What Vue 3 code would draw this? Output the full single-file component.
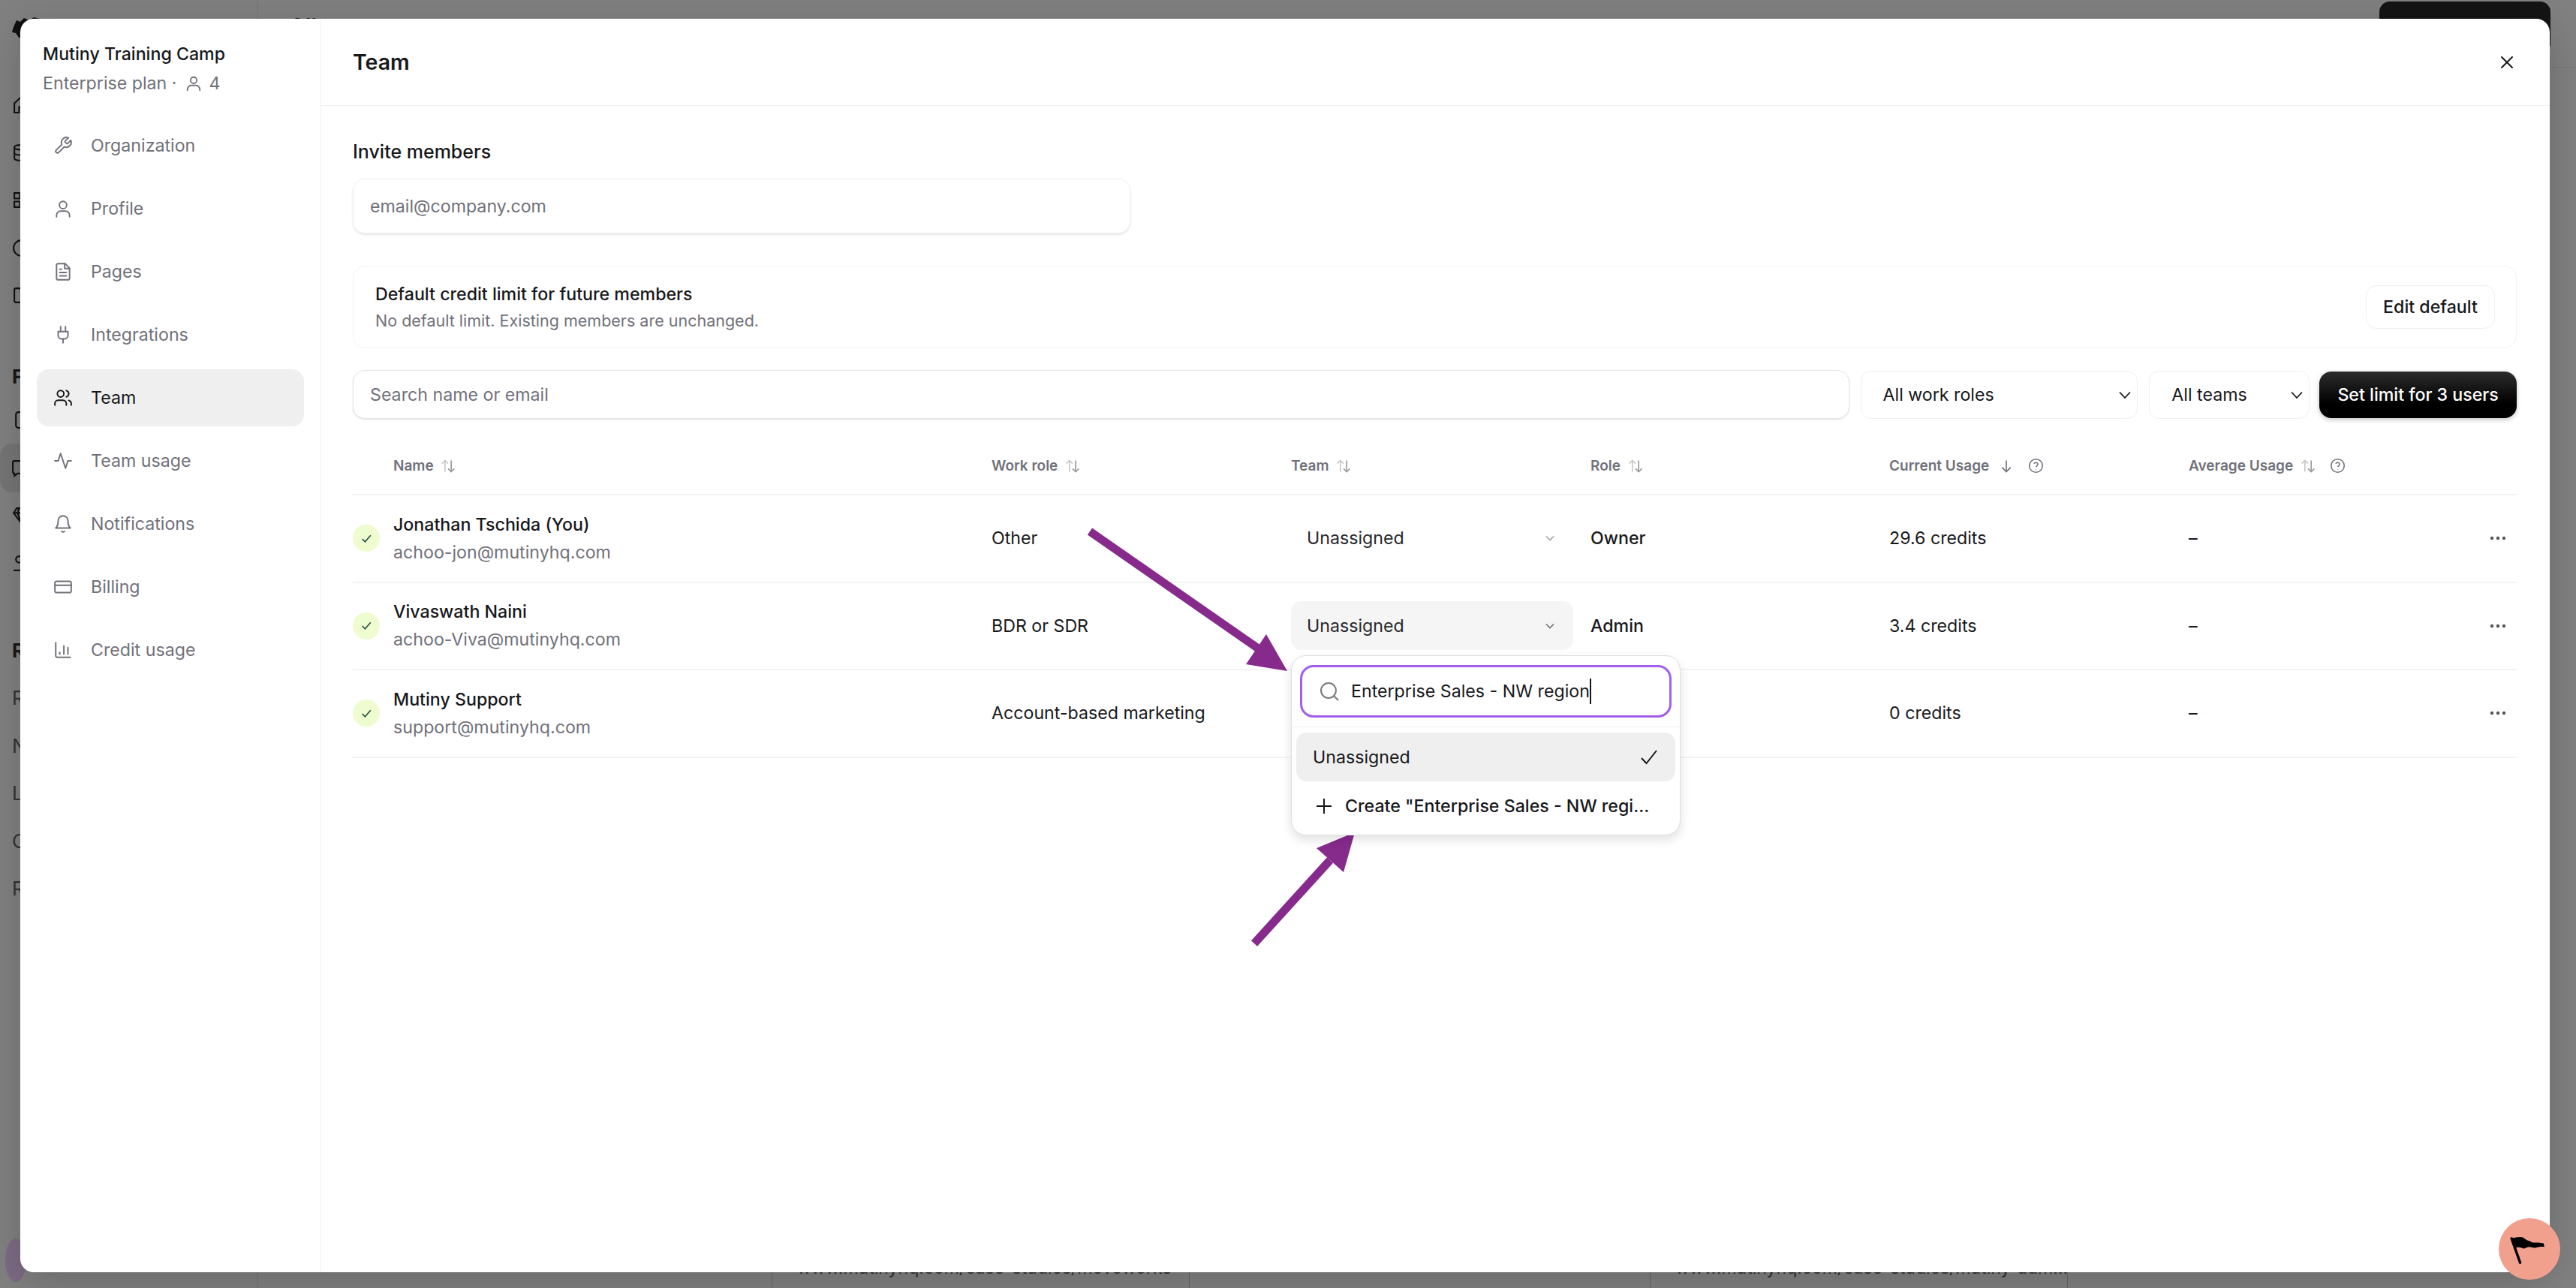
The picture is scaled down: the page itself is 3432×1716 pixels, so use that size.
<template>
  <div class="page">
    <!-- dimmed app behind the modal -->
    <div class="rail">
      <svg class="logo" viewBox="0 0 44 30"><path d="M2 14 6 5l5 2 5-5 7 3 6-4 8 2 4 5-8 12-14 10-10-2-4-6-5-1z" fill="#111" /></svg>
      <div class="rail-icons">
        <svg v-for="(icon, i) in railTop" :key="i" class="rail-icon" viewBox="0 0 24 24" fill="none" stroke="#111" stroke-width="2"><path :d="icon" /></svg>
      </div>
      <div class="rail-head">F</div>
      <div class="rail-icons tight">
        <svg class="rail-icon" viewBox="0 0 24 24" fill="none" stroke="#111" stroke-width="2"><path d="M5 20V5a3 3 0 0 1 3-3h12v20H8a3 3 0 0 1-3-3z" /></svg>
        <div class="rail-active"><svg class="rail-icon" viewBox="0 0 24 24" fill="none" stroke="#111" stroke-width="2"><path d="M3 5a2 2 0 0 1 2-2h14a2 2 0 0 1 2 2v12a2 2 0 0 1-2 2H9l-4 3v-3a2 2 0 0 1-2-2z" /></svg></div>
        <svg class="rail-icon" viewBox="0 0 24 24" fill="none" stroke="#111" stroke-width="2"><path d="M6 3h12l4 6-10 13L2 9zM2 9h20M9 3 7 9l5 13 5-13-2-6" /></svg>
        <svg class="rail-icon" viewBox="0 0 24 24" fill="none" stroke="#111" stroke-width="2"><circle cx="9" cy="7" r="4" /><path d="M2 21h22" /></svg>
      </div>
      <div class="rail-head second">R</div>
      <div class="rail-link" v-for="l in ['R', 'N', 'L', 'C', 'R']" :key="l">{{ l }}</div>
      <div class="rail-avatar"></div>
    </div>
    <div class="back-line"></div>
    <div class="back-title">All pages</div>
    <div class="back-btn"></div>
    <div class="back-rule"></div>
    <div class="back-foot">
      <span class="foot-cell">www.mutinyhq.com/case-studies/movoworks</span>
      <span class="foot-cell">www.mutinyhq.com/case-studies/mutiny-adm...</span>
    </div>

    <div class="modal">
      <aside class="side">
        <div class="org">
          <div class="org-name">Mutiny Training Camp</div>
          <div class="org-plan">
            Enterprise plan ·
            <svg class="plan-icon" viewBox="0 0 24 24" fill="none" stroke="currentColor" stroke-width="2"><circle cx="12" cy="7.5" r="4.5" /><path d="M3 23v-2a6 6 0 0 1 6-6h6a6 6 0 0 1 6 6v2" /></svg>
            4
          </div>
        </div>
        <nav class="nav">
          <div v-for="item in nav" :key="item.label" class="nav-item" :class="{ active: item.label === 'Team' }">
            <svg class="nav-icon" viewBox="0 0 24 24" fill="none" stroke="currentColor" stroke-width="1.8" stroke-linecap="round" stroke-linejoin="round">
              <path v-for="d in item.paths" :key="d" :d="d" />
            </svg>
            <span>{{ item.label }}</span>
          </div>
        </nav>
      </aside>

      <main class="main">
        <header class="head">
          <h1>Team</h1>
          <svg class="close" viewBox="0 0 18 18" fill="none" stroke="#18181b" stroke-width="2" stroke-linecap="round"><path d="M2 2l14 14M16 2 2 16" /></svg>
        </header>
        <div class="content">
          <div class="invite-label">Invite members</div>
          <div class="invite-input">email@company.com</div>

          <div class="limit-card">
            <div>
              <div class="limit-title">Default credit limit for future members</div>
              <div class="limit-sub">No default limit. Existing members are unchanged.</div>
            </div>
            <div class="edit-btn">Edit default</div>
          </div>

          <div class="filters">
            <div class="search">Search name or email</div>
            <div class="filter roles">All work roles
              <svg class="chev" viewBox="0 0 18 18" fill="none" stroke="#18181b" stroke-width="1.8"><path d="m2 5.5 7 7.5 7-7.5" /></svg>
            </div>
            <div class="filter teams">All teams
              <svg class="chev" viewBox="0 0 18 18" fill="none" stroke="#18181b" stroke-width="1.8"><path d="m2 5.5 7 7.5 7-7.5" /></svg>
            </div>
            <div class="limit-btn">Set limit for 3 users</div>
          </div>

          <div class="table">
            <div class="row header">
              <div class="th first">Name
                <svg class="sort" viewBox="0 0 24 24" fill="none" stroke-width="2"><path d="M7 21V3M2 8l5-5 5 5" stroke="#c8c8c8" /><path d="M17 3v18M12 16l5 5 5-5" stroke="#9a9a9a" /></svg>
              </div>
              <div v-for="h in ['Work role', 'Team', 'Role']" :key="h" class="th">{{ h }}
                <svg class="sort" viewBox="0 0 24 24" fill="none" stroke-width="2"><path d="M7 21V3M2 8l5-5 5 5" stroke="#c8c8c8" /><path d="M17 3v18M12 16l5 5 5-5" stroke="#9a9a9a" /></svg>
              </div>
              <div class="th">Current Usage
                <svg class="sort arrow" viewBox="0 0 24 24" fill="none" stroke="#71717a" stroke-width="2"><path d="M12 3v18M5 14l7 7 7-7" /></svg>
                <svg class="help" viewBox="0 0 24 24" fill="none" stroke="#71717a" stroke-width="1.8"><circle cx="12" cy="12" r="10" /><path d="M9.1 9a3 3 0 0 1 5.8 1c0 2-2.9 2.6-2.9 4M12 17.5v.5" /></svg>
              </div>
              <div class="th">Average Usage
                <svg class="sort" viewBox="0 0 24 24" fill="none" stroke-width="2"><path d="M7 21V3M2 8l5-5 5 5" stroke="#c8c8c8" /><path d="M17 3v18M12 16l5 5 5-5" stroke="#9a9a9a" /></svg>
                <svg class="help" viewBox="0 0 24 24" fill="none" stroke="#71717a" stroke-width="1.8"><circle cx="12" cy="12" r="10" /><path d="M9.1 9a3 3 0 0 1 5.8 1c0 2-2.9 2.6-2.9 4M12 17.5v.5" /></svg>
              </div>
            </div>

            <div v-for="(m, i) in members" :key="m.email" class="row member">
              <div class="who">
                <span class="badge">
                  <svg viewBox="0 0 16 16" fill="none" stroke="#1f4d3d" stroke-width="1.5"><path d="m2.5 8.5 3.5 3.5 7-8" /></svg>
                </span>
                <div>
                  <div class="name">{{ m.name }}</div>
                  <div class="email">{{ m.email }}</div>
                </div>
              </div>
              <div class="cell">{{ m.work }}</div>
              <div class="team-cell">
                <div v-if="m.team" class="team-select" :class="{ hover: i === 1 }">
                  Unassigned
                  <svg class="mini-chev" viewBox="0 0 14 14" fill="none" stroke="currentColor" stroke-width="1.6"><path d="m2 4.5 5 5 5-5" /></svg>
                </div>
                <div v-if="i === 1" class="popup">
                  <div class="popup-top">
                    <div class="popup-search">
                      <svg class="popup-glass" viewBox="0 0 26 26" fill="none" stroke="#7a7a7a" stroke-width="2" stroke-linecap="round"><circle cx="12" cy="12" r="10" /><path d="m20 20 4.5 4.5" /></svg>
                      <span>Enterprise Sales - NW region</span><span class="caret"></span>
                    </div>
                  </div>
                  <div class="popup-list">
                    <div class="opt selected">
                      Unassigned
                      <svg class="opt-check" viewBox="0 0 22 22" fill="none" stroke="#18181b" stroke-width="2"><path d="m1 12 6.5 7L21 2" /></svg>
                    </div>
                    <div class="opt create">
                      <svg class="opt-plus" viewBox="0 0 20 20" fill="none" stroke="#18181b" stroke-width="2"><path d="M10 0v20M0 10h20" /></svg>
                      Create "Enterprise Sales - NW regi...
                    </div>
                  </div>
                </div>
              </div>
              <div class="cell role">{{ m.role }}</div>
              <div class="cell">{{ m.usage }}</div>
              <div class="cell avg">
                <span>–</span>
                <svg class="dots" viewBox="0 0 22 6" fill="#555"><circle cx="3" cy="3" r="2.2" /><circle cx="11" cy="3" r="2.2" /><circle cx="19" cy="3" r="2.2" /></svg>
              </div>
            </div>
          </div>
        </div>
      </main>
    </div>

    <!-- annotation arrows drawn over the screenshot -->
    <svg class="arrows" viewBox="0 0 3432 1716">
      <path d="M1452 708 1685 870" stroke="#862a8c" stroke-width="11" fill="none" />
      <polygon points="1715,894 1687,845 1660,885" fill="#862a8c" />
      <path d="M1671 1257 1772 1146" stroke="#862a8c" stroke-width="11" fill="none" />
      <polygon points="1805,1109 1754,1130 1790,1162" fill="#862a8c" />
    </svg>

    <div class="flag-btn">
      <svg viewBox="0 0 50 40" fill="#000">
        <path d="M1 2C6 1 12 0 15 0c4 0 6 4 10 5 4 1 5 3 8 3 4 0 9 0 14 1l1 5c-5-1-8 0-12 1-4 1-6-1-9-1-4 0-6 3-9 2-3-1-6-2-10-1z" />
        <path d="M2 2 14 36" stroke="#000" stroke-width="3.6" stroke-linecap="round" />
      </svg>
    </div>
  </div>
</template>

<script setup>
const railTop = [
  'M3 10l9-8 9 8v12H15v-7H9v7H3z',
  'M3 5c0-4 18-4 18 0v14c0 4-18 4-18 0zM3 5c0 4 18 4 18 0M3 12c0 4 18 4 18 0',
  'M3 3h7v7H3zM14 3h7v7h-7zM3 14h7v7H3zM14 14h7v7h-7z',
  'M12 2a10 10 0 1 0 0 20 10 10 0 1 0 0-20z',
  'M3 5a2 2 0 0 1 2-2h5l2 3h7a2 2 0 0 1 2 2v11a2 2 0 0 1-2 2H5a2 2 0 0 1-2-2z'
]

const nav = [
  { label: 'Organization', paths: ['M14.7 6.3a1 1 0 0 0 0 1.4l1.6 1.6a1 1 0 0 0 1.4 0l3.77-3.77a6 6 0 0 1-7.94 7.94l-6.91 6.91a2.12 2.12 0 0 1-3-3l6.91-6.91a6 6 0 0 1 7.94-7.94z'] },
  { label: 'Profile', paths: ['M12 3a4.5 4.5 0 1 0 0 9 4.5 4.5 0 1 0 0-9z', 'M4 22v-2a5 5 0 0 1 5-5h6a5 5 0 0 1 5 5v2'] },
  { label: 'Pages', paths: ['M14.5 2H6a2 2 0 0 0-2 2v16a2 2 0 0 0 2 2h12a2 2 0 0 0 2-2V7.5z', 'M14 2v6h6', 'M16 13H8', 'M16 17H8', 'M10 9H8'] },
  { label: 'Integrations', paths: ['M12 22v-5', 'M9 8V2', 'M15 8V2', 'M18 8v5a4 4 0 0 1-4 4h-4a4 4 0 0 1-4-4V8z'] },
  { label: 'Team', paths: ['M16 21v-2a4 4 0 0 0-4-4H6a4 4 0 0 0-4 4v2', 'M9 3a4 4 0 1 0 0 8 4 4 0 1 0 0-8z', 'M22 21v-2a4 4 0 0 0-3-3.87', 'M16 3.13a4 4 0 0 1 0 7.75'] },
  { label: 'Team usage', paths: ['M22 12h-4l-3 9L9 3l-3 9H2'] },
  { label: 'Notifications', paths: ['M6 8a6 6 0 0 1 12 0c0 7 3 9 3 9H3s3-2 3-9', 'M10.3 21a1.94 1.94 0 0 0 3.4 0'] },
  { label: 'Billing', paths: ['M4 5h16a2 2 0 0 1 2 2v10a2 2 0 0 1-2 2H4a2 2 0 0 1-2-2V7a2 2 0 0 1 2-2z', 'M2 10h20'] },
  { label: 'Credit usage', paths: ['M3 3v16a2 2 0 0 0 2 2h16', 'M8 17v-2', 'M13 17V7', 'M18 17V9'] }
]

const members = [
  { name: 'Jonathan Tschida (You)', email: 'achoo-jon@mutinyhq.com', work: 'Other', team: true, role: 'Owner', usage: '29.6 credits' },
  { name: 'Vivaswath Naini', email: 'achoo-Viva@mutinyhq.com', work: 'BDR or SDR', team: true, role: 'Admin', usage: '3.4 credits' },
  { name: 'Mutiny Support', email: 'support@mutinyhq.com', work: 'Account-based marketing', team: false, role: '', usage: '0 credits' }
]
</script>

<style>
html, body { margin: 0; background: #808080; }
</style>

<style scoped>
.page {
  position: relative;
  width: 3432px;
  height: 1716px;
  overflow: hidden;
  background: #808080;
  font-family: Inter, "Liberation Sans", sans-serif;
  font-size: 23.2px;
  color: #18181b;
}
.rail {
  width: 110px;
  padding: 22px 0 0 16px;
  box-sizing: border-box;
  display: flex;
  flex-direction: column;
}
.logo { width: 44px; height: 30px; }
.rail-icons { display: flex; flex-direction: column; gap: 38.5px; margin-top: 75px; }
.rail-icons.tight { margin-top: 30px; }
.rail-icon { width: 25px; height: 25px; display: block; }
.rail-active {
  margin: -20px 0 -20px -16px;
  padding: 20px 0 20px 14px;
  background: #757575;
  border-radius: 16px;
}
.rail-head { font-weight: 700; font-size: 26px; margin-top: 81px; line-height: 30px; }
.rail-head.second { margin-top: 89px; }
.rail-link { font-size: 26px; color: #333; margin-top: 33.5px; line-height: 30px; }
.rail-avatar {
  position: absolute;
  left: 7px;
  top: 1650px;
  width: 28px;
  height: 58px;
  border-radius: 50%;
  background: #7b6b84;
}
.back-line { position: absolute; left: 343px; top: 0; bottom: 0; width: 1px; background: #757575; }
.back-title { position: absolute; left: 386px; top: 18px; font-size: 28px; font-weight: 700; }
.back-btn {
  position: absolute;
  right: 34px;
  top: 2px;
  width: 228px;
  height: 70px;
  background: #141414;
  border-radius: 14px;
}
.back-rule { position: absolute; left: 344px; right: 0; top: 89px; height: 1px; background: #767676; }
.back-foot {
  position: absolute;
  left: 1028px;
  top: 1676px;
  display: grid;
  grid-template-columns: 557px 613px 557px;
  line-height: 26px;
  height: 40px;
  font-size: 23px;
  color: #2e2e2e;
}
.foot-cell { padding-left: 33px; border-left: 1px solid #666; border-right: 1px solid #666; white-space: nowrap; }
.foot-cell:nth-child(2) { grid-column: 3; }

.modal {
  position: absolute;
  left: 27px;
  top: 25px;
  width: 3370px;
  height: 1670px;
  background: #fff;
  border-radius: 18px;
  box-shadow: 0 12px 50px rgba(0, 0, 0, 0.18);
  display: flex;
  overflow: hidden;
}
.side {
  width: 401px;
  flex: none;
  box-sizing: border-box;
  padding: 31px 22px 0;
  border-right: 1px solid #f0f0f0;
}
.org { padding-left: 8px; }
.org-name { font-weight: 500; line-height: 32px; }
.org-plan {
  display: flex;
  align-items: center;
  gap: 7px;
  line-height: 32px;
  margin-top: 7px;
  color: #71717a;
}
.plan-icon { width: 22px; height: 24px; margin: 0 3px 0 4px; }
.nav { display: flex; flex-direction: column; gap: 8px; margin-top: 29px; }
.nav-item {
  height: 76px;
  display: flex;
  align-items: center;
  gap: 24px;
  padding-left: 22px;
  border-radius: 16px;
  color: #71717a;
}
.nav-item.active { background: #efefef; color: #18181b; }
.nav-icon { width: 26px; height: 26px; flex: none; }

.main { flex: 1; min-width: 0; display: flex; flex-direction: column; }
.head {
  height: 116px;
  flex: none;
  box-sizing: border-box;
  border-bottom: 1px solid #f0f0f0;
  padding: 0 48px 0 42px;
  display: flex;
  align-items: center;
  justify-content: space-between;
}
.head h1 { margin: 0; font-size: 28.5px; font-weight: 600; }
.close { width: 18px; height: 18px; }
.content { padding: 43px 44px 0 42px; }
.invite-label { font-size: 25px; font-weight: 500; line-height: 36px; }
.invite-input {
  width: 1036px;
  height: 73px;
  margin-top: 18px;
  box-sizing: border-box;
  padding-left: 22px;
  display: flex;
  align-items: center;
  border: 1px solid #f0f0f0;
  border-radius: 16px;
  box-shadow: 0 2px 3px rgba(0, 0, 0, 0.1);
  color: #71717a;
}
.limit-card {
  height: 110px;
  margin-top: 43px;
  box-sizing: border-box;
  padding: 0 28px 0 29px;
  display: flex;
  align-items: center;
  justify-content: space-between;
  border: 1px solid #f3f3f3;
  border-radius: 16px;
}
.limit-title { font-weight: 500; line-height: 32px; }
.limit-sub { color: #71717a; font-size: 21.5px; line-height: 32px; margin-top: 3px; }
.edit-btn {
  height: 58px;
  width: 172px;
  box-sizing: border-box;
  display: flex;
  align-items: center;
  justify-content: center;
  border: 1px solid #f0f0f0;
  border-radius: 14px;
  font-weight: 500;
}
.filters { display: flex; align-items: center; margin-top: 29px; height: 65px; }
.search {
  width: 1995px;
  height: 65px;
  box-sizing: border-box;
  padding-left: 22px;
  display: flex;
  align-items: center;
  border: 1px solid #e4e4e4;
  border-radius: 16px;
  box-shadow: 0 1px 2px rgba(0, 0, 0, 0.14);
  color: #71717a;
}
.filter {
  height: 64px;
  box-sizing: border-box;
  margin-left: 15px;
  padding: 0 7px 0 29px;
  display: flex;
  align-items: center;
  justify-content: space-between;
  border: 1px solid #f0f0f0;
  border-radius: 14px;
}
.filter.roles { width: 370px; }
.filter.teams { width: 214px; }
.chev { width: 18px; height: 18px; }
.limit-btn {
  margin-left: 13px;
  width: 263px;
  height: 62px;
  display: flex;
  align-items: center;
  justify-content: center;
  border-radius: 16px;
  background: linear-gradient(#2c2c2c, #000 70%);
  color: #fff;
  font-weight: 500;
  box-shadow: 0 2px 6px rgba(0, 0, 0, 0.25);
}
.table { margin-top: 37px; }
.row {
  display: grid;
  grid-template-columns: 851px 399px 399px 398px 399px 1fr;
  border-bottom: 2px solid #f3f3f3;
  box-sizing: border-box;
}
.row.header { height: 65px; align-items: center; padding-bottom: 12px; }
.row.member { height: 116.5px; align-items: center; }
.th {
  display: flex;
  align-items: center;
  font-size: 19px;
  font-weight: 600;
  color: #71717a;
  white-space: pre;
}
.th.first { padding-left: 54px; }
.sort { width: 20px; height: 20px; margin-left: 5px; }
.sort.arrow { margin-left: 8px; }
.help { width: 21px; height: 21px; margin-left: 19px; }
.who { display: flex; align-items: center; gap: 18px; }
.badge {
  width: 36px;
  height: 36px;
  border-radius: 50%;
  background: #eefcd0;
  display: flex;
  align-items: center;
  justify-content: center;
}
.badge svg { width: 17px; height: 17px; }
.name { font-weight: 500; line-height: 34px; }
.email { color: #71717a; line-height: 34px; margin-top: 3px; }
.role { font-weight: 500; }
.avg { display: flex; align-items: center; justify-content: space-between; padding-right: 14px; }
.dots { width: 22px; height: 6px; }
.team-cell { position: relative; padding-right: 22px; height: 65px; }
.team-select {
  height: 65px;
  box-sizing: border-box;
  padding: 0 24px 0 21px;
  width: 376px;
  display: flex;
  align-items: center;
  justify-content: space-between;
  border-radius: 14px;
  color: #27272a;
}
.mini-chev { width: 14px; height: 14px; color: #a3a3a3; }
.team-select.hover { background: #f5f5f5; }
.team-select.hover .mini-chev { color: #71717a; }
.popup {
  position: absolute;
  left: 0;
  top: 72px;
  width: 519px;
  height: 240px;
  box-sizing: border-box;
  background: #fff;
  border: 1px solid #dfdfdf;
  border-radius: 20px;
  box-shadow: 0 6px 14px rgba(0, 0, 0, 0.12);
  z-index: 2;
}
.popup-top { padding: 12px 11px 12px; border-bottom: 1px solid #eee; }
.popup-search {
  height: 70px;
  box-sizing: border-box;
  border: 3px solid #a25eea;
  border-radius: 18px;
  display: flex;
  align-items: center;
  padding-left: 23px;
}
.popup-glass { width: 26px; height: 26px; margin-right: 16px; flex: none; }
.caret { width: 2px; height: 34px; background: #18181b; }
.popup-list { padding: 7px 6px; }
.opt {
  height: 65px;
  box-sizing: border-box;
  display: flex;
  align-items: center;
  border-radius: 14px;
  padding: 0 24px 0 22px;
  white-space: nowrap;
}
.opt.selected { background: #efefef; justify-content: space-between; }
.opt.create { margin-top: 0; font-weight: 500; gap: 18px; padding-left: 27px; }
.opt-check { width: 22px; height: 22px; }
.opt-plus { width: 20px; height: 20px; flex: none; }
.arrows { position: absolute; left: 0; top: 0; width: 3432px; height: 1716px; pointer-events: none; }
.flag-btn {
  position: absolute;
  left: 3329px;
  top: 1623px;
  width: 82px;
  height: 82px;
  border-radius: 50%;
  background: #f2a08e;
}
.flag-btn svg { position: absolute; left: 15px; top: 25px; width: 48px; height: 38px; }
</style>
